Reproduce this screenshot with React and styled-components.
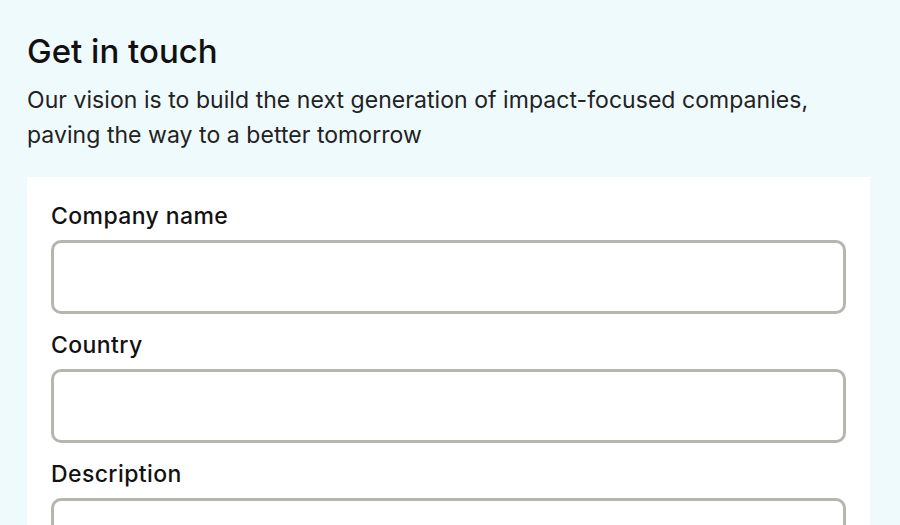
import React from "react"
import styled, { createGlobalStyle } from "styled-components"

const GlobalStyle = createGlobalStyle`
  html, body {
    margin: 0;
    padding: 0;
    background: #effafd;
  }
  body {
    font-family: Inter, "Noto Sans", sans-serif;
    color: #121212;
  }
`

const Page = styled.main`
  padding: 31px 30px 0 27px;
  min-height: 525px;
  box-sizing: border-box;
`

const Title = styled.h1`
  margin: 0;
  font-size: 33px;
  font-weight: 500;
  line-height: 40px;
  color: #111;
`

const Lead = styled.p`
  margin: 12px 0 0;
  font-size: 23px;
  line-height: 35px;
  font-weight: 400;
  letter-spacing: 0.05px;
  color: #222;
  max-width: 820px;
`

const Card = styled.section`
  margin-top: 24px;
  background: #fff;
  padding: 24px 24px 24px;
  display: flex;
  flex-direction: column;
  gap: 16px;
`

const Field = styled.div`
  display: flex;
  flex-direction: column;
  gap: 9px;
`

const Label = styled.label`
  font-size: 23px;
  line-height: 30px;
  font-weight: 500;
  letter-spacing: 0.4px;
  color: #121212;
`

const Input = styled.input`
  box-sizing: border-box;
  height: ${p => p.$tall ? "140px" : "74px"};
  width: 100%;
  border: 3px solid #b6b6ae;
  border-radius: 10px;
  background: #fff;
  font: inherit;
  font-size: 20px;
  padding: 0 16px;
  outline: none;
`

const fields = [
  { id: "company", label: "Company name" },
  { id: "country", label: "Country" },
  { id: "description", label: "Description", tall: true },
]

export default function App() {
  return (
    <>
      <GlobalStyle />
      <Page>
        <Title>Get in touch</Title>
        <Lead>
          Our vision is to build the next generation of impact-focused companies,
          paving the way to a better tomorrow
        </Lead>
        <Card>
          {fields.map(f => (
            <Field key={f.id}>
              <Label htmlFor={f.id}>{f.label}</Label>
              <Input id={f.id} $tall={f.tall} />
            </Field>
          ))}
        </Card>
      </Page>
    </>
  )
}
